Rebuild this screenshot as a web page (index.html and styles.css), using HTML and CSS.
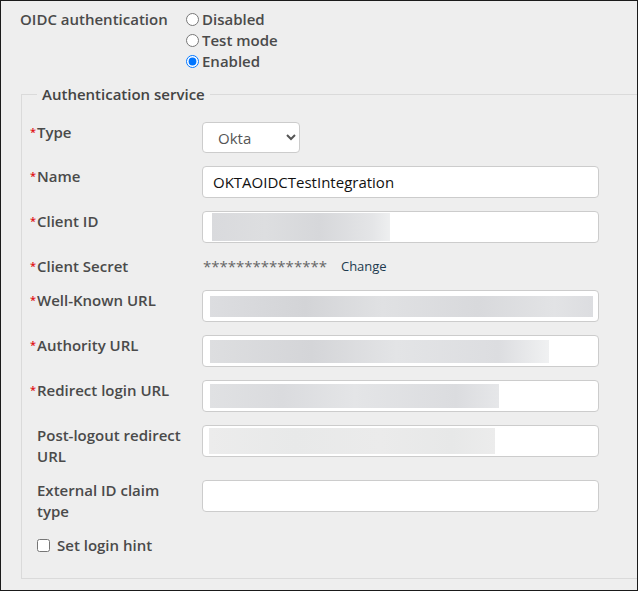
FILE: index.html
```html
<!DOCTYPE html>
<html lang="en">
<head>
  <meta charset="UTF-8" />
  <meta name="viewport" content="width=device-width, initial-scale=1.0"/>
  <title>OIDC authentication</title>
  <link rel="stylesheet" href="styles.css">
</head>
<body>
  <div class="frame">
    <div class="toprow">
      <div class="toplabel">OIDC authentication</div>
      <div class="radios">
        <label class="radio"><input type="radio" name="mode" /> Disabled</label>
        <label class="radio"><input type="radio" name="mode" /> Test mode</label>
        <label class="radio"><input type="radio" name="mode" checked /> Enabled</label>
      </div>
    </div>

    <fieldset class="service">
      <legend>Authentication service</legend>

      <div class="row">
        <div class="label"><span class="mark">*</span><span class="text">Type</span></div>
        <select class="select">
          <option>Okta</option>
          <option>Azure AD</option>
        </select>
      </div>

      <div class="row">
        <div class="label"><span class="mark">*</span><span class="text">Name</span></div>
        <input class="input" type="text" value="OKTAOIDCTestIntegration" />
      </div>

      <div class="row">
        <div class="label"><span class="mark">*</span><span class="text">Client ID</span></div>
        <div class="input field"><div class="blur blur-id"></div></div>
      </div>

      <div class="row short">
        <div class="label"><span class="mark">*</span><span class="text">Client Secret</span></div>
        <div class="secret">
          <span class="stars">***************</span>
          <a class="change" href="#">Change</a>
        </div>
      </div>

      <div class="row">
        <div class="label"><span class="mark">*</span><span class="text">Well-Known URL</span></div>
        <div class="input field"><div class="blur blur-wk"></div></div>
      </div>

      <div class="row">
        <div class="label"><span class="mark">*</span><span class="text">Authority URL</span></div>
        <div class="input field"><div class="blur blur-auth"></div></div>
      </div>

      <div class="row">
        <div class="label"><span class="mark">*</span><span class="text">Redirect login URL</span></div>
        <div class="input field"><div class="blur blur-redir"></div></div>
      </div>

      <div class="row">
        <div class="label"><span class="mark"></span><span class="text">Post-logout redirect URL</span></div>
        <div class="input field"><div class="blur blur-post"></div></div>
      </div>

      <div class="row">
        <div class="label"><span class="mark"></span><span class="text">External ID claim type</span></div>
        <input class="input" type="text" />
      </div>

      <div class="row short last">
        <label class="check"><input type="checkbox" /> Set login hint</label>
      </div>
    </fieldset>
  </div>
</body>
</html>
```

FILE: styles.css
```css
body {
  margin: 0;
  font-family: "Open Sans", "Noto Sans", sans-serif;
  font-size: 15px;
  color: #4a4a4a;
}

.frame {
  width: 638px;
  height: 591px;
  box-sizing: border-box;
  border: 1px solid #1a1a1a;
  background-color: #eeeeee;
  padding: 8px 0 0 19px;
  overflow: hidden;
}

.toprow {
  display: flex;
  line-height: 21px;
  font-weight: 600;
}

.toplabel {
  width: 166px;
}

.radios {
  display: flex;
  flex-direction: column;
}

.radio {
  display: flex;
  align-items: center;
}

.radio input {
  margin: 0 3px 0 0;
  width: 13px;
  height: 13px;
}

.service {
  width: 700px;
  margin: 12px 0 0 1px;
  padding: 17px 0 22px 8px;
  border: 1px solid #dadada;
  box-sizing: border-box;
}

.service legend {
  margin-left: 7px;
  padding: 0 5px;
  line-height: 21px;
  font-weight: 600;
  color: #444;
}

.row {
  display: flex;
  align-items: flex-start;
  margin-bottom: 13px;
}

.row.last {
  margin-bottom: 0;
}

.label {
  display: flex;
  width: 157px;
  margin-right: 15px;
  line-height: 21px;
  font-weight: 600;
}

.mark {
  width: 7px;
  flex: none;
  color: #e01010;
  font-size: 11px;
  line-height: 19px;
}

.text {
  width: 150px;
}

.select {
  width: 98px;
  height: 31px;
  padding: 0 6px 0 11px;
  border: 1px solid #cccccc;
  border-radius: 4px;
  background-color: #fff;
  font-family: inherit;
  font-size: 15px;
  color: #555;
}

.input {
  width: 397px;
  height: 32px;
  box-sizing: border-box;
  border: 1px solid #cccccc;
  border-radius: 4px;
  background-color: #fff;
  padding: 0 10px;
  font-family: inherit;
  font-size: 15px;
  color: #111;
}

.field {
  display: flex;
  align-items: center;
  padding: 0 0 0 7px;
}

.blur {
  background: linear-gradient(90deg, #dcdde0 0%, #d3d4d7 25%, #e0e1e3 45%, #d8d9dc 70%, #e2e3e5 90%, #dcdde0 100%);
}

.blur-id {
  width: 178px;
  height: 28px;
  margin-left: 2px;
  background: linear-gradient(90deg, #d9dadd 0%, #dddee0 30%, #d6d7da 60%, #e4e5e7 90%, #eeeff0 100%);
}

.blur-wk {
  width: 383px;
  height: 21px;
}

.blur-auth {
  width: 339px;
  height: 23px;
  background: linear-gradient(90deg, #dddee0 0%, #d4d5d8 30%, #e3e4e6 55%, #dcdde0 85%, #f0f1f2 100%);
}

.blur-redir {
  width: 289px;
  height: 24px;
  background: linear-gradient(90deg, #e0e1e3 0%, #dadbde 25%, #e4e5e7 50%, #dbdcdf 85%, #e6e7e9 100%);
}

.blur-post {
  width: 286px;
  height: 26px;
  margin-left: -1px;
  background: linear-gradient(90deg, #ececec 0%, #e8e9e9 30%, #ebebeb 60%, #e7e8e8 85%, #ececec 100%);
}

.secret {
  line-height: 21px;
  display: flex;
  align-items: center;
}

.stars {
  color: #666;
  margin-left: 1px;
}

.change {
  margin-left: 14px;
  font-size: 13px;
  color: #1d3a4f;
  text-decoration: none;
}

.check {
  display: flex;
  align-items: center;
  line-height: 21px;
  padding-left: 7px;
  font-weight: 600;
}

.check input {
  margin: 0 7px 0 0;
  width: 13px;
  height: 13px;
}
```
